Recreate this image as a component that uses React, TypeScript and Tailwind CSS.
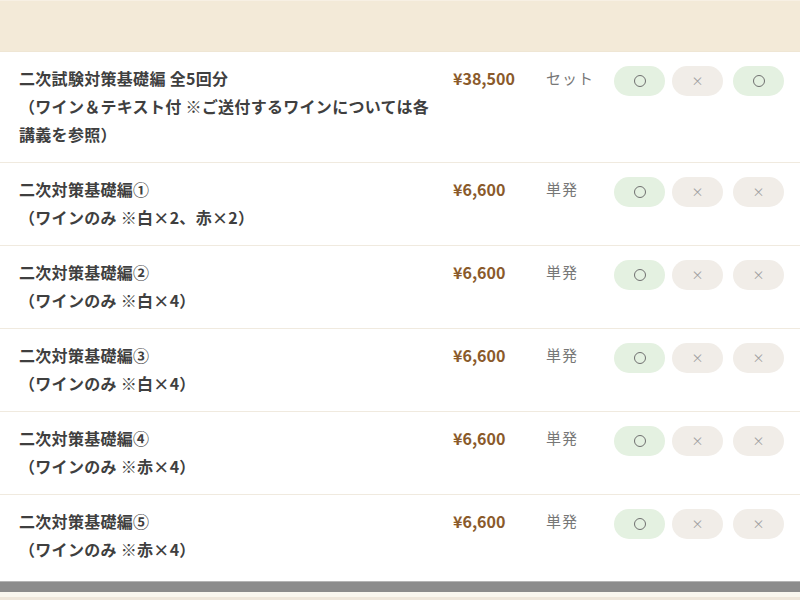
import React from "react";

type Row = {
  name: string[];
  price: string;
  type: string;
  marks: boolean[];
};

const rows: Row[] = [
  {
    name: ["二次試験対策基礎編 全5回分", "（ワイン＆テキスト付 ※ご送付するワインについては各講義を参照）"],
    price: "¥38,500",
    type: "セット",
    marks: [true, false, true],
  },
  { name: ["二次対策基礎編①", "（ワインのみ ※白×2、赤×2）"], price: "¥6,600", type: "単発", marks: [true, false, false] },
  { name: ["二次対策基礎編②", "（ワインのみ ※白×4）"], price: "¥6,600", type: "単発", marks: [true, false, false] },
  { name: ["二次対策基礎編③", "（ワインのみ ※白×4）"], price: "¥6,600", type: "単発", marks: [true, false, false] },
  { name: ["二次対策基礎編④", "（ワインのみ ※赤×4）"], price: "¥6,600", type: "単発", marks: [true, false, false] },
  { name: ["二次対策基礎編⑤", "（ワインのみ ※赤×4）"], price: "¥6,600", type: "単発", marks: [true, false, false] },
];

function Pill({ ok }: { ok: boolean }) {
  return ok ? (
    <div className="w-[51px] h-[30px] rounded-full bg-[#e4f1e1] flex items-center justify-center">
      <span className="block w-[12px] h-[12px] rounded-full border border-[#707070]" />
    </div>
  ) : (
    <div className="w-[51px] h-[30px] rounded-full bg-[#f1ede8] flex items-center justify-center text-[12px] leading-none text-[#a0a0a0]">
      ×
    </div>
  );
}

export default function App() {
  return (
    <div
      className="w-[800px] h-[600px] bg-white overflow-hidden flex flex-col"
      style={{ fontFamily: '"Noto Sans CJK JP", "Noto Sans", sans-serif' }}
    >
      <div className="h-[52px] bg-[#f3ead8] border-t border-t-[#f7f0e4] border-b border-b-[#efe6d4] shrink-0" />
      {rows.map((r, i) => (
        <div
          key={i}
          className={`flex pl-[19px] pt-[12px] ${i === rows.length - 1 ? "pb-[16px]" : "pb-[14px] border-b border-[#f0eadf]"}`}
        >
          <div className="w-[434px] pr-[14px] text-[16px] leading-[28px] font-bold text-[#3f3f3f] tracking-[0.3px]">
            {r.name.map((t, j) => (
              <div key={j}>{t}</div>
            ))}
          </div>
          <div className="w-[93px] text-[16px] leading-[28px] font-bold text-[#8a5a2b]">{r.price}</div>
          <div className="w-[68px] text-[15px] leading-[28px] text-[#777777] tracking-[1px]">{r.type}</div>
          <div className="flex gap-[7px] pt-[2px] h-fit">
            <Pill ok={r.marks[0]} />
            <Pill ok={r.marks[1]} />
            <div className="ml-[3px]">
              <Pill ok={r.marks[2]} />
            </div>
          </div>
        </div>
      ))}
      <div className="h-[1px] bg-[#b4b4b4] mt-[2px] shrink-0" />
      <div className="h-[10px] bg-[#8c8c8c] shrink-0" />
      <div className="h-[5px] bg-[#faf7ef] shrink-0" />
      <div className="flex-1 bg-[#efe7db]" />
    </div>
  );
}
